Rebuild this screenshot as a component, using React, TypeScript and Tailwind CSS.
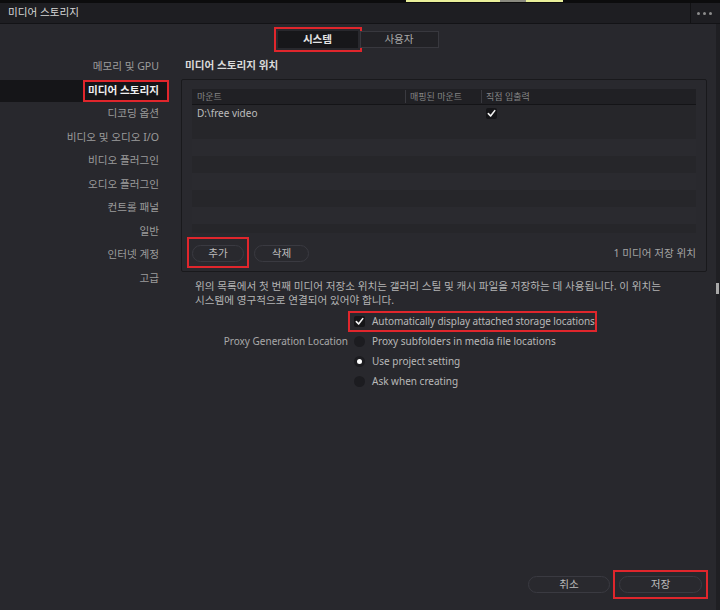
const sideItems = [
  "메모리 및 GPU",
  "미디어 스토리지",
  "디코딩 옵션",
  "비디오 및 오디오 I/O",
  "비디오 플러그인",
  "오디오 플러그인",
  "컨트롤 패널",
  "일반",
  "인터넷 계정",
  "고급",
];

const red = "outline-2 outline-[#e0262c]";

const CheckBox = ({ checked }: { checked?: boolean }) => (
  <span className="flex h-[11px] w-[11px] items-center justify-center rounded-[2px] bg-[#151518]">
    {checked && (
      <svg width="9" height="9" viewBox="0 0 10 10">
        <path d="M1.5 5.2 L4 7.8 L8.6 1.8" fill="none" stroke="#f2f2f2" strokeWidth="1.8" strokeLinecap="round" strokeLinejoin="round" />
      </svg>
    )}
  </span>
);

const Radio = ({ on }: { on?: boolean }) => (
  <span className="flex h-[11px] w-[11px] items-center justify-center rounded-full bg-[#1c1c20]">
    {on && <span className="h-[5px] w-[5px] rounded-full bg-white" />}
  </span>
);

const Pill = ({ label, className = "" }: { label: string; className?: string }) => (
  <button
    type="button"
    className={`flex h-[17px] items-center justify-center rounded-full border border-[#3a3a41] bg-[#29292e] text-[10.6px] text-[#bdbdbd] ${className}`}
  >
    {label}
  </button>
);

export default function App() {
  return (
    <div className="flex h-[610px] w-[720px] flex-col overflow-hidden bg-[#28282d] font-['Noto_Sans','Noto_Sans_CJK_KR',sans-serif] text-[#b5b5b5]">
      {/* strip of the window behind */}
      <div className="flex h-[3px] shrink-0 bg-[#0c0c0d]">
        <div className="w-[406px]" />
        <div className="h-[2px] w-[94px] bg-[#e9ef9a]" />
        <div className="h-[2px] w-[26px] bg-[#8a8a80]" />
        <div className="h-[2px] w-[37px] bg-[#e9ef9a]" />
      </div>

      {/* title bar */}
      <div className="flex h-[21px] shrink-0 items-center border-b border-[#131316] bg-[#1e1e22]">
        <span className="pl-[8px] text-[10.6px] text-[#d6d6d6]">미디어 스토리지</span>
        <div className="ml-auto flex h-full items-center gap-[3px] border-l border-[#121214] pl-[6px] pr-[8px]">
          <span className="h-[3px] w-[3px] rounded-full bg-[#8c8c8c]" />
          <span className="h-[3px] w-[3px] rounded-full bg-[#8c8c8c]" />
          <span className="h-[3px] w-[3px] rounded-full bg-[#8c8c8c]" />
        </div>
      </div>

      <div className="flex min-h-0 flex-1">
        <div className="flex flex-1 flex-col">
          {/* tabs */}
          <div className="flex justify-center pt-[7px]">
            <div className="flex gap-[2px]">
              <button
                type="button"
                className={`h-[17px] w-[80px] bg-[#17171a] text-[10.6px] font-bold text-[#e4e4e4] ${red} outline-offset-[2px]`}
              >
                시스템
              </button>
              <button
                type="button"
                className="h-[17px] w-[79px] border border-[#38383e] bg-[#222226] text-[10.6px] text-[#a8a8a8]"
              >
                사용자
              </button>
            </div>
          </div>

          <div className="mt-[6px] flex flex-1">
            {/* sidebar */}
            <div className="w-[170px] shrink-0 pt-[1.5px] text-[10.6px]">
              {sideItems.map((it, i) =>
                i === 1 ? (
                  <div key={it} className="flex h-[23.5px] items-center justify-end pr-[1px]">
                    <div className="flex h-[22px] w-full justify-end bg-[#151518]">
                      <span className={`flex h-full items-center pl-[5px] pr-[10px] font-bold text-[#f0f0f0] ${red} -outline-offset-2`}>
                        {it}
                      </span>
                    </div>
                  </div>
                ) : (
                  <div key={it} className="flex h-[23.5px] items-center justify-end pr-[11px] text-[#9c9c9c]">
                    {it}
                  </div>
                )
              )}
            </div>

            {/* content */}
            <div className="flex flex-1 flex-col pl-[11px] pr-[9px] pb-[17px]">
              <div className="flex h-[24px] items-center pl-[4px] text-[10.6px] font-bold text-[#dadada]">
                미디어 스토리지 위치
              </div>

              <div className="mt-[1px] flex h-[193px] flex-col rounded-[2px] border border-[#19191c] bg-[#29292e] px-[10px] pt-[9px]">
                <div className="flex h-[144px] flex-col bg-[#26262a]">
                  <div className="flex h-[16px] shrink-0 items-center border-b border-[#141417] bg-[#202024] text-[9px] text-[#848484]">
                    <div className="w-[213px] pl-[5px]">마운트</div>
                    <div className="w-[76px] border-l border-[#3a3a40] pl-[4px]">매핑된 마운트</div>
                    <div className="flex-1 border-l border-[#3a3a40] pl-[4px]">직접 입출력</div>
                  </div>
                  <div className="flex h-[17px] items-center text-[10px] text-[#bcbcbc]">
                    <div className="w-[213px] pl-[5px]">D:\free video</div>
                    <div className="w-[76px]" />
                    <div className="pl-[5px]">
                      <CheckBox checked />
                    </div>
                  </div>
                  {[1, 2, 3, 4, 5, 6].map((r) => (
                    <div key={r} className={`h-[17px] ${r % 2 === 0 ? "bg-[#2a2a2f]" : ""}`} />
                  ))}
                </div>

                <div className="mt-[12px] flex items-center">
                  <div className={`-mx-[3px] -mb-[4px] -mt-[6px] px-[3px] pb-[4px] pt-[6px] ${red}`}>
                    <Pill label="추가" className="w-[52px]" />
                  </div>
                  <Pill label="삭제" className="ml-[10px] w-[55px]" />
                  <span className="ml-auto text-[10.6px] text-[#a3a3a3]">1 미디어 저장 위치</span>
                </div>
              </div>

              <p className="mt-[7px] pl-[14px] text-[10.6px] leading-[14px] text-[#b3b3b3]">
                위의 목록에서 첫 번째 미디어 저장소 위치는 갤러리 스틸 및 캐시 파일을 저장하는 데 사용됩니다. 이 위치는
                <br />
                시스템에 영구적으로 연결되어 있어야 합니다.
              </p>

              <div className="mt-[4px] grid grid-cols-[167px_1fr] text-[10px] text-[#b8b8b8]">
                <div />
                <div className="flex h-[20px] items-center">
                  <div className={`inline-flex h-[21px] items-center gap-[7px] pl-[6px] pr-[2px] tracking-[-0.08px] ${red} -outline-offset-2`}>
                    <CheckBox checked />
                    <span>Automatically display attached storage locations</span>
                  </div>
                </div>

                <div className="flex h-[20px] items-center justify-end text-[#a9a9a9]">Proxy Generation Location</div>
                <div className="flex h-[20px] items-center gap-[7px] pl-[6px]">
                  <Radio />
                  <span>Proxy subfolders in media file locations</span>
                </div>

                <div />
                <div className="flex h-[20px] items-center gap-[7px] pl-[6px]">
                  <Radio on />
                  <span>Use project setting</span>
                </div>

                <div />
                <div className="flex h-[20px] items-center gap-[7px] pl-[6px]">
                  <Radio />
                  <span>Ask when creating</span>
                </div>
              </div>

              <div className="mt-auto flex items-center justify-end gap-[9px] pr-[5px]">
                <Pill label="취소" className="w-[82px] bg-[#27272c]" />
                <div className={`-m-[4px] p-[4px] ${red}`}>
                  <Pill label="저장" className="w-[83px] bg-[#27272c]" />
                </div>
              </div>
            </div>
          </div>
        </div>

        {/* edge of the window behind */}
        <div className="w-[4px] shrink-0 bg-[#1f1f23] pt-[259px]">
          <div className="h-[11px] w-[3px] bg-[#a8a8a8]" />
        </div>
      </div>
    </div>
  );
}
